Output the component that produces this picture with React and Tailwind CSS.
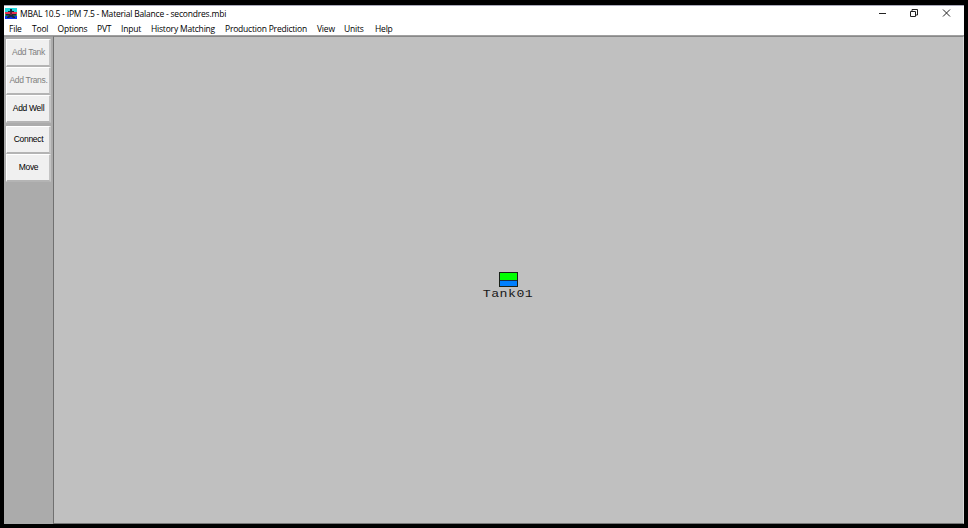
import React from "react";

const menus = [
  { label: "File", box: "w-[23px]" },
  { label: "Tool", box: "w-[25.5px]" },
  { label: "Options", box: "w-[39.5px]" },
  { label: "PVT", box: "w-[24px]" },
  { label: "Input", box: "w-[30px]" },
  { label: "History Matching", box: "w-[74px]" },
  { label: "Production Prediction", box: "w-[92px]" },
  { label: "View", box: "w-[27px]" },
  { label: "Units", box: "w-[31px]" },
  { label: "Help", box: "w-[20px]" },
];

function AppIcon() {
  return (
    <svg width="12" height="11" viewBox="0 0 12 11" className="shrink-0">
      <rect width="12" height="4" fill="#20d8e0" />
      <rect y="4" width="12" height="2" fill="#e83050" />
      <rect y="6" width="12" height="2" fill="#28a850" />
      <rect y="8" width="12" height="3" fill="#1030e8" />
      <path d="M5 1H7V3H9V4H7V6H11V7.5H8L10 9V10H8L6 8.5L4 10H2V9L4 7.5H1V6H5V4H3V3H5Z" fill="#18283c" />
      <rect x="5.5" y="4" width="1" height="3" fill="#c01838" />
    </svg>
  );
}

function WindowControls() {
  return (
    <svg width="74" height="12" viewBox="0 0 74 12" fill="none" stroke="#222" strokeWidth="1" className="shrink-0 -translate-y-px">
      <path d="M1 6.5H8" />
      <path d="M32.5 4.5H37.5V9.5H32.5ZM34 4.5V2.5H39.5V8H37.5" />
      <path d="M65 2.5L72 9.5M72 2.5L65 9.5" />
    </svg>
  );
}

function ToolButton({ label, disabled = false, className = "" }) {
  return (
    <button
      disabled={disabled}
      className={`flex h-[28px] w-[45px] shrink-0 items-center justify-center whitespace-nowrap border-t border-l border-r-2 border-b-2 border-t-white border-l-white border-r-[#c4c4c4] border-b-[#b4b4b4] bg-[#f0f0f0] pl-[1px] font-['Liberation_Sans',Arial,sans-serif] text-[8.5px] leading-none tracking-[-0.3px] ${disabled ? "text-[#808080]" : "text-black"} ${className}`}
    >
      {label}
    </button>
  );
}

function Tank() {
  return (
    <div className="flex w-[50px] flex-col items-center">
      <div className="flex h-[15px] w-[19px] flex-col border border-[#182018]">
        <div className="h-[8px] border-b border-[#183048] bg-[#00ff00]" />
        <div className="flex-1 bg-[#0080ff]" />
      </div>
      <span className="mt-[2px] scale-x-[1.2] whitespace-nowrap font-['Liberation_Mono','Courier_New',monospace] text-[11px] leading-[10px] tracking-[0.4px] text-[#181818]">
        Tank01
      </span>
    </div>
  );
}

export default function App() {
  return (
    <div className="flex h-[528px] w-[968px] flex-col overflow-hidden border-4 border-t-[5px] border-black bg-white font-['Open_Sans','Noto_Sans',sans-serif] text-[8.5px] tracking-[-0.2px] text-black">
      <header className="flex h-[17px] shrink-0 items-center border-t border-[#aaaabb] pl-[1px] pr-[12px]">
        <div className="flex -translate-y-px">
          <AppIcon />
        </div>
        <span className="ml-[3px] flex-1 whitespace-nowrap leading-none">
          MBAL 10.5 - IPM 7.5 - Material Balance - secondres.mbi
        </span>
        <WindowControls />
      </header>
      <nav className="flex h-[13px] shrink-0 items-center pl-[5px] pt-[1px] leading-none">
        {menus.map((menu) => (
          <span key={menu.label} className={`shrink-0 whitespace-nowrap ${menu.box}`}>
            {menu.label}
          </span>
        ))}
      </nav>
      <main className="flex min-h-0 flex-1 border-t border-[#a0a0a0]">
        <aside className="flex w-[49px] shrink-0 flex-col border-t border-[#969696] bg-[#ababab] pt-[2px] pl-[2px]">
          <ToolButton label="Add Tank" disabled />
          <ToolButton label="Add Trans." disabled />
          <ToolButton label="Add Well" />
          <ToolButton label="Connect" className="mt-[3px]" />
          <ToolButton label="Move" />
        </aside>
        <section className="flex-1 border border-t-[#888] border-r-[#d8d8d8] border-b-[#777] border-l-[#707070] bg-[#c0c0c0] pt-[235px] pl-[429px]">
          <Tank />
        </section>
      </main>
    </div>
  );
}
